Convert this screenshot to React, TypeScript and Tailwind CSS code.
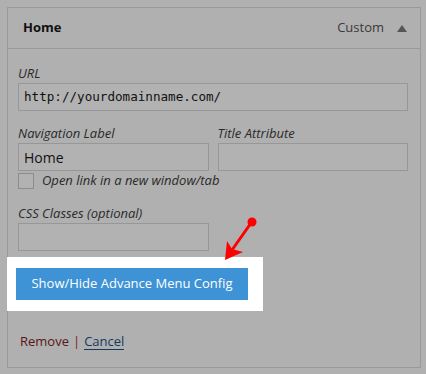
import React from "react";

const font = { fontFamily: "'Open Sans', 'Noto Sans', sans-serif" };

function Field({ label, value, mono, className }: { label: string; value?: string; mono?: boolean; className?: string }) {
  return (
    <label className={`flex flex-col ${className ?? ""}`}>
      <span className="italic text-[13px] leading-[18px] text-[#2a2a2a] mb-[1px]">{label}</span>
      <span
        className={`h-[28px] border border-[#979797] bg-[#b2b2b2] flex items-center px-[5px] text-[#111] ${
          mono ? "font-['DejaVu_Sans_Mono',monospace] text-[12.6px]" : "text-[14px]"
        }`}
      >
        {value}
      </span>
    </label>
  );
}

export default function App() {
  return (
    <div className="relative w-[426px] h-[374px] bg-[#b0b0b0] p-[7px]" style={font}>
      <div className="w-[414px] h-[361px] border border-[#999] flex flex-col">
        {/* header */}
        <div className="h-[41px] border-b border-[#999] flex items-center pl-[15px] pr-[13px]">
          <span className="font-bold text-[13px] text-[#111]">Home</span>
          <span className="ml-auto text-[13px] text-[#3a3a3a]">Custom</span>
          <span className="ml-[13px] w-0 h-0 border-l-[5px] border-r-[5px] border-b-[7px] border-l-transparent border-r-transparent border-b-[#555]" />
        </div>

        {/* body */}
        <div className="flex flex-col pl-[10px] pr-[12px] pt-[15px]">
          <Field label="URL" value="http://yourdomainname.com/" mono />
          <div className="flex gap-[9px] mt-[13px]">
            <Field label="Navigation Label" value="Home" className="w-[191px]" />
            <Field label="Title Attribute" className="w-[191px]" />
          </div>
          <div className="flex items-center mt-[2px] h-[16px]">
            <span className="w-[16px] h-[16px] border border-[#8d8d8d] bg-[#b2b2b2]" />
            <span className="ml-[8px] italic text-[13px] text-[#2a2a2a]">Open link in a new window/tab</span>
          </div>
          <Field label="CSS Classes (optional)" className="w-[191px] mt-[15px]" />
        </div>

        {/* highlighted button */}
        <div className="ml-[-1px] mt-[6px] w-[256px] h-[54px] bg-white flex items-center pl-[9px]">
          <button className="w-[232px] h-[32px] bg-[#3d93d6] text-white text-[13px]">
            Show/Hide Advance Menu Config
          </button>
        </div>

        <div className="flex items-center pl-[12px] mt-[21px] text-[13px]">
          <span className="text-[#5a1414]">Remove</span>
          <span className="mx-[4px] text-[#7a2020]">|</span>
          <span className="text-[#123a5e] border-b border-[#123a5e] leading-[16px]">Cancel</span>
        </div>
      </div>

      {/* annotation arrow */}
      <svg className="absolute left-0 top-0 pointer-events-none" width="426" height="374" viewBox="0 0 426 374">
        <line x1="251" y1="223" x2="232" y2="250" stroke="#f00" strokeWidth="3" strokeLinecap="round" />
        <circle cx="252" cy="222" r="4.5" fill="#f00" />
        <polygon points="225,260 227,241 232,249 243,252" fill="#f00" />
      </svg>
    </div>
  );
}
